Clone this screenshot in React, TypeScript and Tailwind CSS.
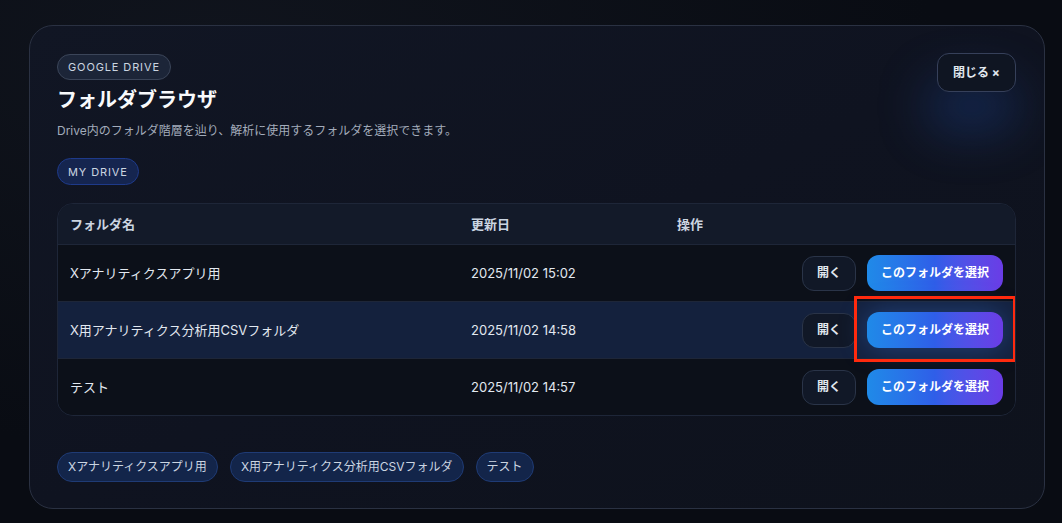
import React from 'react';

const folders = [
  { name: 'Xアナリティクスアプリ用', updated: '2025/11/02 15:02', active: false },
  { name: 'X用アナリティクス分析用CSVフォルダ', updated: '2025/11/02 14:58', active: true },
  { name: 'テスト', updated: '2025/11/02 14:57', active: false },
];

function FolderRow({ name, updated, active }: { name: string; updated: string; active: boolean }) {
  return (
    <div
      className={
        'grid h-[57px] grid-cols-[400px_206px_1fr] items-center border-t border-[#1e2638] text-[13px] text-[#e2e8f0] ' +
        (active ? 'bg-[#14213d]' : 'bg-[#0c1019]')
      }
    >
      <div className="pl-[12px]">{name}</div>
      <div className="pl-[13px]">{updated}</div>
      <div className="flex items-center justify-end gap-[11px] pr-[12px]">
        <button className="h-[35px] rounded-xl border border-[#2a3448] bg-[#111827] px-[14px] text-xs font-bold text-[#e2e8f0]">
          開く
        </button>
        <span className="relative">
          <button
            className={
              'h-[36px] rounded-xl bg-gradient-to-r from-[#1f8ae8] via-[#2f5ee8] to-[#6a3ce6] px-[14px] text-xs font-bold text-white ' +
              (active ? 'shadow-[0_0_28px_rgba(59,130,246,0.35)]' : '')
            }
          >
            このフォルダを選択
          </button>
          {active && (
            <span className="pointer-events-none absolute -inset-x-[13px] -top-[16px] -bottom-[14px] border-[3px] border-[#ff2a0e]" />
          )}
        </span>
      </div>
    </div>
  );
}

export default function App() {
  return (
    <div className="min-h-[523px] bg-[radial-gradient(ellipse_at_20%_10%,#10141d_0%,#090c13_60%)] pt-[25px] pl-[29px] font-['Inter','Noto_Sans_CJK_JP',sans-serif]">
      <div className="relative h-[484px] w-[1016px] overflow-hidden rounded-3xl border border-[#2a3142] bg-gradient-to-br from-[#111624] via-[#0f1320] to-[#0e121c] pt-[27px] pl-[27px] pr-[28px]">
        <div className="pointer-events-none absolute right-[24px] top-[52px] h-[56px] w-[96px] rounded-full bg-[#1e4fae]/30 blur-xl" />

        <div className="relative flex items-start justify-between">
          <div>
            <span className="inline-flex h-[26px] items-center rounded-full border border-[#3b4559] bg-[#1c2538] px-[10px] text-[11px] tracking-[0.08em] text-[#cbd5e1]">
              GOOGLE DRIVE
            </span>
            <h1 className="mt-[6px] text-xl leading-7 font-bold text-[#f8fafc]">フォルダブラウザ</h1>
            <p className="mt-[9px] text-xs leading-4 text-[#a3acbb]">
              Drive内のフォルダ階層を辿り、解析に使用するフォルダを選択できます。
            </p>
          </div>
          <button className="h-[39px] rounded-xl border border-[#36405a] bg-[#0f1522] px-[15px] text-xs font-bold text-[#e2e8f0]">
            閉じる ×
          </button>
        </div>

        <span className="relative mt-[19px] inline-flex h-[27px] items-center rounded-full border border-[#1e3a8a] bg-[#15254f] px-[10px] text-[11px] tracking-[0.08em] text-[#cbd5e1]">
          MY DRIVE
        </span>

        <div className="relative mt-[18px] overflow-hidden rounded-2xl border border-[#1e2638]">
          <div className="grid h-[40px] grid-cols-[400px_206px_1fr] items-center bg-[#131a29] text-[13px] font-bold text-[#cbd5e1]">
            <div className="pl-[12px]">フォルダ名</div>
            <div className="pl-[13px]">更新日</div>
            <div className="pl-[13px]">操作</div>
          </div>
          {folders.map((f) => (
            <FolderRow key={f.name} {...f} />
          ))}
        </div>

        <div className="relative mt-[36px] flex gap-3">
          {folders.map((f) => (
            <span
              key={f.name}
              className="inline-flex h-[30px] items-center rounded-full border border-[#1f3b75] bg-[#13254a] px-[10px] text-xs text-[#cbd5e1]"
            >
              {f.name}
            </span>
          ))}
        </div>
      </div>
    </div>
  );
}
